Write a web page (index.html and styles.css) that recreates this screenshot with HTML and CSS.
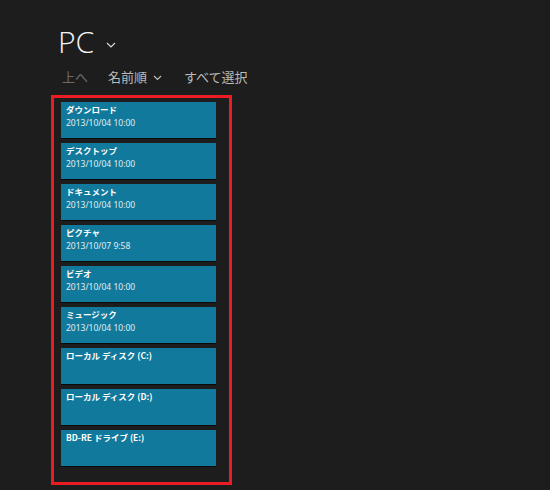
FILE: index.html
```html
<!DOCTYPE html>
<html lang="ja">
<head>
<meta charset="utf-8">
<link rel="stylesheet" href="styles.css">
</head>
<body>
<div class="screen">
  <header class="title-row">
    <h1 class="title">PC</h1>
    <svg class="chev-big" width="10" height="6" viewBox="0 0 10 6"><path d="M1 1 L5 5 L9 1" fill="none" stroke="#d8d8d8" stroke-width="1.2"/></svg>
  </header>
  <nav class="toolbar">
    <span class="cmd disabled">上へ</span>
    <span class="cmd sort">名前順<svg class="chev-small" width="9" height="6" viewBox="0 0 9 6"><path d="M1 1 L4.5 4.5 L8 1" fill="none" stroke="#bdbdbd" stroke-width="1.2"/></svg></span>
    <span class="cmd">すべて選択</span>
  </nav>
  <section class="panel">
    <div class="tile"><div class="name">ダウンロード</div><div class="date">2013/10/04 10:00</div></div>
    <div class="tile"><div class="name">デスクトップ</div><div class="date">2013/10/04 10:00</div></div>
    <div class="tile"><div class="name">ドキュメント</div><div class="date">2013/10/04 10:00</div></div>
    <div class="tile"><div class="name">ピクチャ</div><div class="date">2013/10/07 9:58</div></div>
    <div class="tile"><div class="name">ビデオ</div><div class="date">2013/10/04 10:00</div></div>
    <div class="tile"><div class="name">ミュージック</div><div class="date">2013/10/04 10:00</div></div>
    <div class="tile"><div class="name">ローカル ディスク (C:)</div></div>
    <div class="tile"><div class="name">ローカル ディスク (D:)</div></div>
    <div class="tile"><div class="name">BD-RE ドライブ (E:)</div></div>
  </section>
</div>
</body>
</html>
```
FILE: styles.css
```css
html, body {
  margin: 0;
  padding: 0;
  background: #1d1d1d;
}
.screen {
  width: 550px;
  height: 490px;
  overflow: hidden;
  font-family: "Noto Sans CJK JP", "Noto Sans", sans-serif;
  color: #fff;
}
.title-row {
  display: flex;
  align-items: center;
  padding: 24px 0 0 58px;
  height: 36px;
}
.title {
  margin: 0;
  font-family: "Open Sans", "Noto Sans", sans-serif;
  font-weight: 300;
  font-size: 30px;
  line-height: 36px;
  color: #f4f4f4;
}
.chev-big {
  margin: 6px 0 0 12px;
}
.toolbar {
  display: flex;
  align-items: center;
  padding: 6px 0 0 62px;
  height: 22px;
  font-size: 13px;
  line-height: 22px;
  color: #bababa;
}
.cmd.disabled {
  color: #6c6c6c;
  margin-right: 20px;
}
.sort {
  display: flex;
  align-items: center;
  margin-right: 22px;
}
.chev-small {
  margin: 2px 0 0 6px;
}
.panel {
  box-sizing: border-box;
  margin: 7px 0 0 51px;
  width: 181px;
  height: 390px;
  border: 3px solid #ec1c24;
  padding: 4px 0 0 7px;
  display: flex;
  flex-direction: column;
  gap: 4px;
}
.tile {
  box-sizing: border-box;
  width: 155px;
  height: 37px;
  background: #117a9c;
  border-bottom: 1px solid #0a0a0a;
  padding: 1px 0 0 5px;
}
.name {
  font-size: 8.5px;
  font-weight: 700;
  line-height: 12px;
  color: #fff;
}
.date {
  margin-top: 2px;
  font-family: "Noto Sans", "Noto Sans CJK JP", sans-serif;
  font-size: 8.5px;
  line-height: 11px;
  color: #e2ecf0;
}
```
